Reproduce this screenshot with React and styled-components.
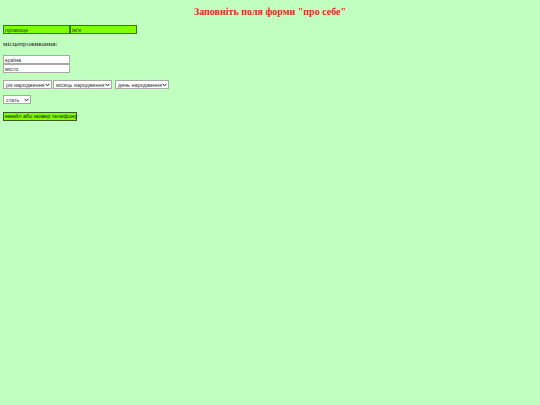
import React from "react";
import styled, { createGlobalStyle } from "styled-components";

const Global = createGlobalStyle`
  html, body { margin: 0; padding: 0; background: #c0ffc0; }
  body { font-family: "Liberation Serif", "Times New Roman", serif; }
`;

const Page = styled.div`
  min-height: 405px;
  padding: 0 3px;
  box-sizing: border-box;
  display: flex;
  flex-direction: column;
  align-items: flex-start;
`;

const Title = styled.h1`
  align-self: stretch;
  margin: 6px 0 0;
  font-size: 10px;
  line-height: 12px;
  font-weight: bold;
  text-align: center;
  color: #e8281e;
  font-family: "Liberation Serif", serif;
`;

const Row = styled.div`
  display: flex;
  align-items: center;
  margin-top: ${(p) => p.$mt || 0}px;
`;

const Field = styled.input`
  box-sizing: border-box;
  width: 67px;
  height: 9px;
  margin: 0;
  padding: 0 1px;
  font-family: "Liberation Sans", Arial, sans-serif;
  font-size: 5.5px;
  color: #222;
  background: ${(p) => (p.$green ? "#80ff00" : "#ffffff")};
  border: 1px solid ${(p) => (p.$green ? "#4a6a30" : "#a8a8a8")};
  outline: none;
  &::placeholder { color: #333; opacity: 1; }
`;

const Label = styled.div`
  margin-top: 6px;
  font-size: 7px;
  line-height: 9px;
  color: #222;
`;

const Stack = styled.div`
  display: flex;
  flex-direction: column;
  margin-top: 6px;
`;

const SelectBox = styled.div`
  box-sizing: border-box;
  width: ${(p) => p.$w}px;
  height: 9px;
  margin-right: ${(p) => p.$mr || 0}px;
  padding: 0 1px 0 2px;
  display: flex;
  align-items: center;
  justify-content: space-between;
  background: #ffffff;
  border: 1px solid #a8a8a8;
  font-family: "Liberation Sans", Arial, sans-serif;
  font-size: 5.4px;
  color: #333;
  white-space: nowrap;
`;

const Chevron = () => (
  <svg width="5" height="4" viewBox="0 0 5 4" style={{ flexShrink: 0 }}>
    <path d="M0.6 0.8 L2.5 2.9 L4.4 0.8" fill="none" stroke="#222" strokeWidth="1" />
  </svg>
);

const Button = styled.button`
  box-sizing: border-box;
  margin: 8px 0 0;
  width: 74px;
  height: 9px;
  padding: 0 1px;
  background: #80ff00;
  border: 1px solid #3a5a2a;
  font-family: "Liberation Sans", Arial, sans-serif;
  font-size: 5.6px;
  line-height: 7px;
  color: #111;
  white-space: nowrap;
  text-align: left;
`;

function Select({ label, w, mr }) {
  return (
    <SelectBox $w={w} $mr={mr}>
      <span>{label}</span>
      <Chevron />
    </SelectBox>
  );
}

export default function App() {
  return (
    <>
      <Global />
      <Page>
        <Title>Заповніть поля форми "про себе"</Title>
        <Row $mt={7}>
          <Field $green placeholder="прізвище" />
          <Field $green placeholder="ім'я" />
        </Row>
        <Label>місцепроживання:</Label>
        <Stack>
          <Field placeholder="країна" />
          <Field placeholder="місто" />
        </Stack>
        <Row $mt={7}>
          <Select label="рік народження" w={49} mr={1} />
          <Select label="місяць народження" w={59} mr={3} />
          <Select label="день народження" w={54} />
        </Row>
        <Row $mt={6}>
          <Select label="стать" w={28} />
        </Row>
        <Button>емейл або номер телефону</Button>
      </Page>
    </>
  );
}
